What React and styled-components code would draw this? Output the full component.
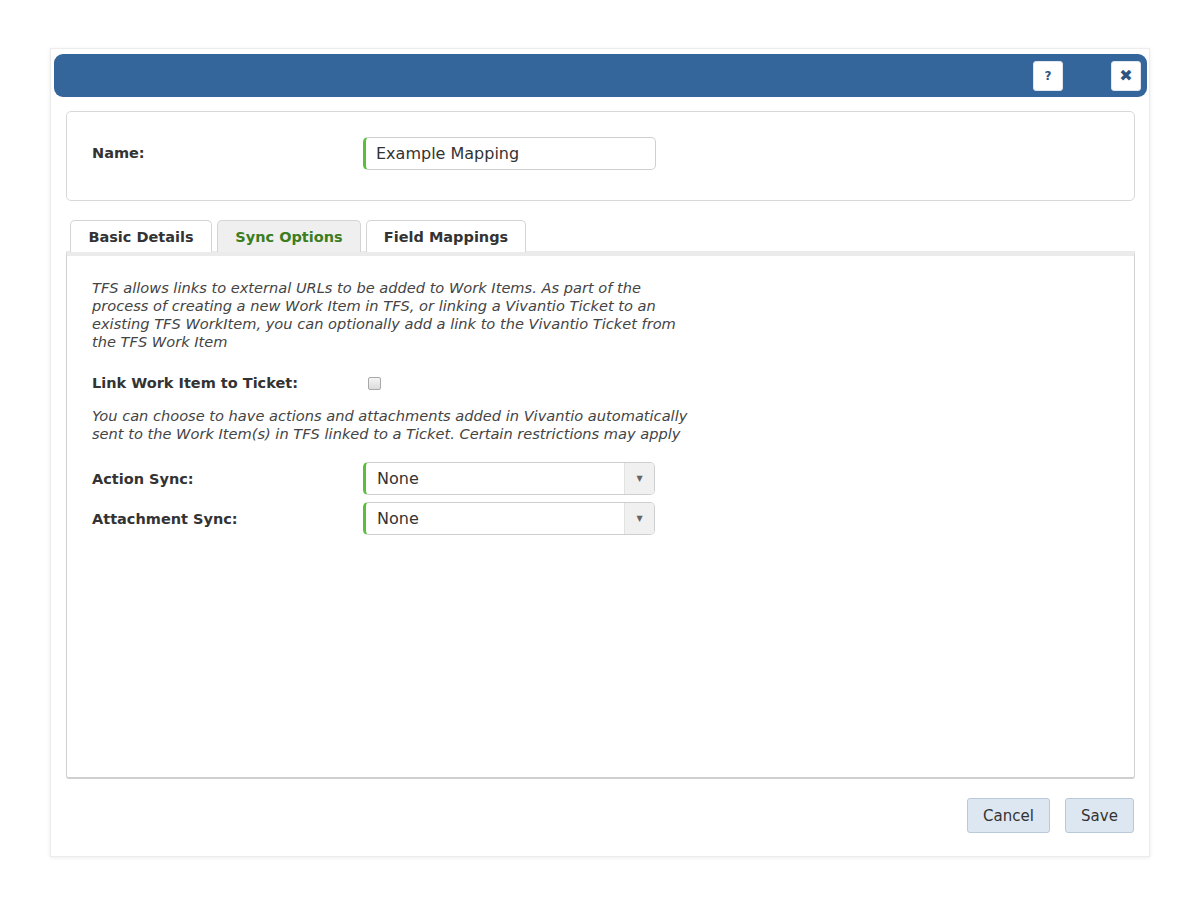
import React from "react";
import styled, { createGlobalStyle } from "styled-components";

const Global = createGlobalStyle`
  html, body { margin: 0; padding: 0; background: #fff; }
  body { font-family: "DejaVu Sans", Verdana, sans-serif; color: #333; }
`;

const Page = styled.div`
  padding: 48px 0 0 50px;
  height: 853px;
`;

const Dialog = styled.div`
  box-sizing: border-box;
  width: 1100px;
  height: 809px;
  background: #fff;
  border: 1px solid #ececec;
  box-shadow: 0 1px 4px rgba(0,0,0,0.08);
  padding: 5px 2px 0 3px;
  display: flex;
  flex-direction: column;
`;

const TitleBar = styled.div`
  height: 43px;
  background: #34659b;
  border-radius: 9px;
  display: flex;
  align-items: center;
  justify-content: flex-end;
  padding-right: 6px;
  gap: 48px;
`;

const TitleButton = styled.button`
  box-sizing: border-box;
  width: 30px;
  height: 30px;
  border: 1px solid #dfe6ee;
  border-radius: 3px;
  background: #fff;
  color: #2d5583;
  font-family: "DejaVu Sans", sans-serif;
  font-weight: bold;
  font-size: ${p => p.$size || 13}px;
  padding: 0;
  display: flex;
  align-items: center;
  justify-content: center;
`;

const Body = styled.div`
  flex: 1;
  display: flex;
  flex-direction: column;
  padding: 14px 12px 0 12px;
`;

const NamePanel = styled.div`
  box-sizing: border-box;
  height: 90px;
  border: 1px solid #d8d8d8;
  border-radius: 5px;
  display: flex;
  align-items: center;
  padding: 0 0 6px 25px;
`;

const Label = styled.div`
  width: 271px;
  font-weight: bold;
  font-size: 14.5px;
  color: #333;
`;

const TextInput = styled.div`
  box-sizing: border-box;
  width: 293px;
  height: 33px;
  border: 1px solid #cfcfcf;
  border-left: 3px solid #5cbf3a;
  border-radius: 5px;
  display: flex;
  align-items: center;
  padding-left: 10px;
  font-size: 16px;
  color: #333;
`;

const TabStrip = styled.div`
  margin-top: 19px;
  display: flex;
  gap: 5px;
  padding-left: 4px;
  height: 31px;
  align-items: flex-end;
`;

const Tab = styled.div`
  box-sizing: border-box;
  width: ${p => p.$w}px;
  height: 32px;
  border: 1px solid #d4d4d4;
  border-bottom: none;
  border-radius: 5px 5px 0 0;
  background: ${p => (p.$active ? "#efefef" : "#fff")};
  color: ${p => (p.$active ? "#3c7d1e" : "#333")};
  font-weight: bold;
  font-size: 14.5px;
  display: flex;
  align-items: center;
  justify-content: center;
  margin-bottom: -1px;
  position: relative;
  z-index: 1;
`;

const Panel = styled.div`
  box-sizing: border-box;
  height: 528px;
  border: 1px solid #d0d0d0;
  border-top: 5px solid #ebebeb;
  border-bottom: 2px solid #cfcfcf;
  border-radius: 0 0 3px 3px;
  padding: 23px 25px 0 25px;
`;

const Note = styled.p`
  margin: 0;
  font-style: italic;
  font-size: 14.6px;
  line-height: 18px;
  color: #444;
  width: 640px;
  white-space: nowrap;
`;

const FieldRow = styled.div`
  display: flex;
  align-items: center;
  margin-top: ${p => p.$mt || 0}px;
`;

const FieldLabel = styled.div`
  width: 271px;
  font-weight: bold;
  font-size: 14.5px;
  color: #333;
`;

const Checkbox = styled.div`
  box-sizing: border-box;
  width: 13px;
  height: 13px;
  margin-left: 5px;
  border: 1px solid #a9a9a9;
  border-radius: 2px;
  background: linear-gradient(#f4f4f4, #dcdcdc);
`;

const Select = styled.div`
  box-sizing: border-box;
  width: 292px;
  height: 33px;
  border: 1px solid #cfcfcf;
  border-left: 3px solid #5cbf3a;
  border-radius: 5px;
  display: flex;
  align-items: stretch;
  font-size: 16px;
  color: #333;
  overflow: hidden;
`;

const SelectValue = styled.div`
  flex: 1;
  display: flex;
  align-items: center;
  padding-left: 11px;
`;

const Arrow = styled.div`
  width: 29px;
  background: #f0f0f0;
  border-left: 1px solid #e2e2e2;
  display: flex;
  align-items: center;
  justify-content: center;
  color: #666;
  font-size: 8px;
`;

const Footer = styled.div`
  display: flex;
  justify-content: flex-end;
  gap: 15px;
  margin-top: 19px;
  padding-right: 1px;
`;

const Button = styled.button`
  box-sizing: border-box;
  width: ${p => p.$w}px;
  height: 35px;
  padding: 0;
  background: #dde7f1;
  border: 1px solid #b9c9d9;
  border-radius: 3px;
  color: #333;
  font-family: "DejaVu Sans", sans-serif;
  font-size: 15px;
`;

export default function App() {
  return (
    <>
      <Global />
      <Page>
        <Dialog>
          <TitleBar>
            <TitleButton $size={12}>?</TitleButton>
            <TitleButton $size={16}>✖</TitleButton>
          </TitleBar>
          <Body>
            <NamePanel>
              <Label>Name:</Label>
              <TextInput>Example Mapping</TextInput>
            </NamePanel>
            <TabStrip>
              <Tab $w={142}>Basic Details</Tab>
              <Tab $w={144} $active>Sync Options</Tab>
              <Tab $w={160}>Field Mappings</Tab>
            </TabStrip>
            <Panel>
              <Note>
                TFS allows links to external URLs to be added to Work Items. As part of the<br />
                process of creating a new Work Item in TFS, or linking a Vivantio Ticket to an<br />
                existing TFS WorkItem, you can optionally add a link to the Vivantio Ticket from<br />
                the TFS Work Item
              </Note>
              <FieldRow $mt={24}>
                <FieldLabel>Link Work Item to Ticket:</FieldLabel>
                <Checkbox />
              </FieldRow>
              <FieldRow $mt={16}>
                <Note>
                  You can choose to have actions and attachments added in Vivantio automatically<br />
                  sent to the Work Item(s) in TFS linked to a Ticket. Certain restrictions may apply
                </Note>
              </FieldRow>
              <FieldRow $mt={19}>
                <FieldLabel>Action Sync:</FieldLabel>
                <Select>
                  <SelectValue>None</SelectValue>
                  <Arrow>▼</Arrow>
                </Select>
              </FieldRow>
              <FieldRow $mt={7}>
                <FieldLabel>Attachment Sync:</FieldLabel>
                <Select>
                  <SelectValue>None</SelectValue>
                  <Arrow>▼</Arrow>
                </Select>
              </FieldRow>
            </Panel>
            <Footer>
              <Button $w={83}>Cancel</Button>
              <Button $w={69}>Save</Button>
            </Footer>
          </Body>
        </Dialog>
      </Page>
    </>
  );
}
